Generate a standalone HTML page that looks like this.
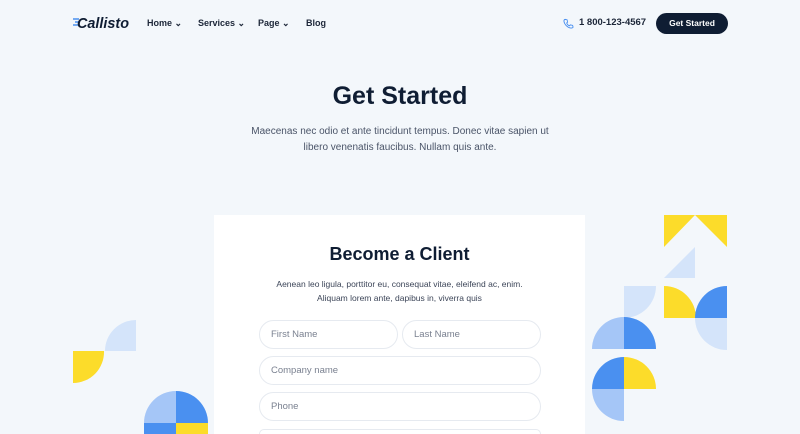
<!DOCTYPE html>
<html><head><meta charset="utf-8"><style>
*{margin:0;padding:0;box-sizing:border-box}
html,body{width:800px;height:434px;overflow:hidden}
body{background:#f3f7fb;font-family:"Liberation Sans",sans-serif;color:#0f1d33;position:relative}
.a{position:absolute}
.nav{top:18px;font-size:9px;font-weight:bold;color:#1c2638}
.btn{left:656px;top:13px;width:72px;height:21px;border-radius:11px;background:#0f1d33;color:#fff;font-size:8.5px;font-weight:bold;text-align:center;line-height:21px}
h1{position:absolute;top:82px;width:800px;text-align:center;font-size:25px;font-weight:bold}
.p{top:124px;width:800px;text-align:center;font-size:10px;line-height:16px;color:#4a5468}
.card{left:214px;top:215px;width:371px;height:219px;background:#fff;overflow:hidden}
.in{position:absolute;height:29px;border:1px solid #e6eaf0;border-radius:15px;font-size:9.5px;color:#7a8190;padding-left:11px;line-height:27px;background:#fff}
</style></head><body>
<svg class="a" style="left:72px;top:13px" width="64" height="20">
<path d="M1 6h6M3 9h5M1 12h6" stroke="#4a90f0" stroke-width="1.5"/>
<text x="5" y="15" font-family="Liberation Sans" font-size="15" font-weight="bold" font-style="italic" fill="#0f1d33" textLength="52" lengthAdjust="spacingAndGlyphs">Callisto</text></svg>
<div class="a nav" style="left:147px">Home ⌄</div>
<div class="a nav" style="left:198px">Services ⌄</div>
<div class="a nav" style="left:258px">Page ⌄</div>
<div class="a nav" style="left:306px">Blog</div>
<svg class="a" style="left:563px;top:18px" width="11" height="11" viewBox="0 0 24 24"><path d="M5 3l4 1 1 5-2 2c1 3 3 5 6 6l2-2 5 1 1 4c-1 2-3 2-5 2C10 21 3 14 2 7c0-2 1-4 3-4z" fill="none" stroke="#4a90f0" stroke-width="2"/></svg>
<div class="a nav" style="left:579px;top:17px;font-size:9.5px">1 800-123-4567</div>
<div class="a btn">Get Started</div>
<h1>Get Started</h1>
<div class="a p">Maecenas nec odio et ante tincidunt tempus. Donec vitae sapien ut<br>libero venenatis faucibus. Nullam quis ante.</div>
<div class="a card">
<div style="position:absolute;top:29px;width:371px;text-align:center;font-size:18px;font-weight:bold">Become a Client</div>
<div style="position:absolute;top:63px;width:371px;text-align:center;font-size:8.5px;line-height:13.5px;color:#3c4558">Aenean leo ligula, porttitor eu, consequat vitae, eleifend ac, enim.<br>Aliquam lorem ante, dapibus in, viverra quis</div>
<div class="in" style="left:45px;top:105px;width:139px">First Name</div>
<div class="in" style="left:188px;top:105px;width:139px">Last Name</div>
<div class="in" style="left:45px;top:141px;width:282px">Company name</div>
<div class="in" style="left:45px;top:177px;width:282px">Phone</div>
<div class="in" style="left:45px;top:214px;width:282px;height:5px;border-bottom:none;border-radius:15px 15px 0 0"></div>
</div>
<svg class="a" style="left:0;top:0" width="800" height="434">
<g>
<path d="M664 215H695L664 247Z" fill="#fcdc2a"/>
<path d="M695 215H727V247Z" fill="#fcdc2a"/>
<path d="M664 278L695 247V278Z" fill="#d4e4fa"/>
<path d="M624 286H656A32 32 0 0 1 624 318Z" fill="#d4e4fa"/>
<path d="M664 318V286A32 32 0 0 1 696 318Z" fill="#fcdc2a"/>
<path d="M727 318V286A32 32 0 0 0 695 318Z" fill="#4a90f0"/>
<path d="M727 318V350A32 32 0 0 1 695 318Z" fill="#d4e4fa"/>
<path d="M624 349V317A32 32 0 0 0 592 349Z" fill="#a5c6f7"/>
<path d="M624 349V317A32 32 0 0 1 656 349Z" fill="#4a90f0"/>
<path d="M624 389V357A32 32 0 0 0 592 389Z" fill="#4a90f0"/>
<path d="M624 389V357A32 32 0 0 1 656 389Z" fill="#fcdc2a"/>
<path d="M624 389V421A32 32 0 0 1 592 389Z" fill="#a5c6f7"/>
<path d="M136 351V320A31 31 0 0 0 105 351Z" fill="#d4e4fa"/>
<path d="M104 351H73V383A31 31 0 0 0 104 351Z" fill="#fcdc2a"/>
<path d="M176 423V391A32 32 0 0 0 144 423Z" fill="#a5c6f7"/>
<rect x="144" y="423" width="32" height="11" fill="#4a90f0"/>
<path d="M176 423V391A32 32 0 0 1 208 423Z" fill="#4a90f0"/>
<rect x="176" y="423" width="32" height="11" fill="#fcdc2a"/>
</g></svg>
</body></html>
